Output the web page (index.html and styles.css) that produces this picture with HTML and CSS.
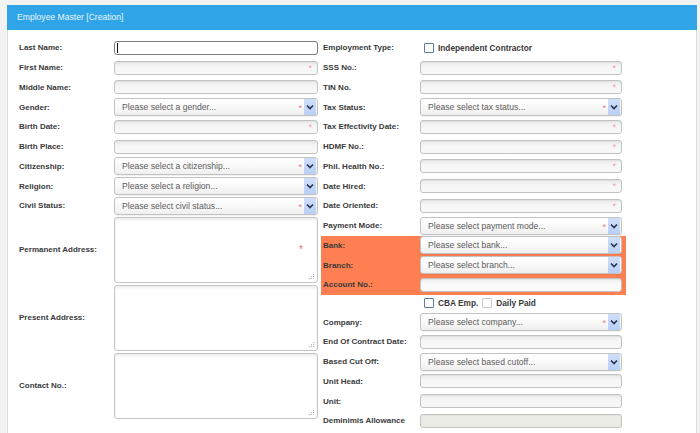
FILE: index.html
```html
<!DOCTYPE html>
<html>
<head>
<meta charset="utf-8">
<link rel="stylesheet" href="styles.css">
</head>
<body>
<div class="panel">
  <div class="panel-header">Employee Master [Creation]</div>
  <div class="panel-body">
    <div class="col col-left">
      <div class="row"><span class="lbl">Last Name:</span><div class="field"><div class="txt focus"><span class="caret"></span></div></div></div>
      <div class="row"><span class="lbl">First Name:</span><div class="field"><div class="txt"><span class="req">*</span></div></div></div>
      <div class="row"><span class="lbl">Middle Name:</span><div class="field"><div class="txt"></div></div></div>
      <div class="row"><span class="lbl">Gender:</span><div class="field"><div class="sel"><span class="ph">Please select a gender...</span><span class="sreq">*</span><span class="btn"><svg width="8" height="6" viewBox="0 0 8 6"><path d="M1 1.5 L4 4.5 L7 1.5" fill="none" stroke="#26344f" stroke-width="1.6"/></svg></span></div></div></div>
      <div class="row"><span class="lbl">Birth Date:</span><div class="field"><div class="txt"><span class="req">*</span></div></div></div>
      <div class="row"><span class="lbl">Birth Place:</span><div class="field"><div class="txt"></div></div></div>
      <div class="row"><span class="lbl">Citizenship:</span><div class="field"><div class="sel"><span class="ph">Please select a citizenship...</span><span class="sreq">*</span><span class="btn"><svg width="8" height="6" viewBox="0 0 8 6"><path d="M1 1.5 L4 4.5 L7 1.5" fill="none" stroke="#26344f" stroke-width="1.6"/></svg></span></div></div></div>
      <div class="row"><span class="lbl">Religion:</span><div class="field"><div class="sel"><span class="ph">Please select a religion...</span><span class="btn"><svg width="8" height="6" viewBox="0 0 8 6"><path d="M1 1.5 L4 4.5 L7 1.5" fill="none" stroke="#26344f" stroke-width="1.6"/></svg></span></div></div></div>
      <div class="row"><span class="lbl">Civil Status:</span><div class="field"><div class="sel"><span class="ph">Please select civil status...</span><span class="sreq">*</span><span class="btn"><svg width="8" height="6" viewBox="0 0 8 6"><path d="M1 1.5 L4 4.5 L7 1.5" fill="none" stroke="#26344f" stroke-width="1.6"/></svg></span></div></div></div>
      <div class="row row-ta"><span class="lbl">Permanent Address:</span><div class="field"><div class="ta"><span class="tareq">*</span><svg class="grip" width="7" height="7" viewBox="0 0 7 7"><g fill="#b5b5b5"><rect x="5" y="1" width="1" height="1"/><rect x="3" y="3" width="1" height="1"/><rect x="5" y="3" width="1" height="1"/><rect x="1" y="5" width="1" height="1"/><rect x="3" y="5" width="1" height="1"/><rect x="5" y="5" width="1" height="1"/></g></svg></div></div></div>
      <div class="row row-ta"><span class="lbl">Present Address:</span><div class="field"><div class="ta"><svg class="grip" width="7" height="7" viewBox="0 0 7 7"><g fill="#b5b5b5"><rect x="5" y="1" width="1" height="1"/><rect x="3" y="3" width="1" height="1"/><rect x="5" y="3" width="1" height="1"/><rect x="1" y="5" width="1" height="1"/><rect x="3" y="5" width="1" height="1"/><rect x="5" y="5" width="1" height="1"/></g></svg></div></div></div>
      <div class="row row-ta"><span class="lbl">Contact No.:</span><div class="field"><div class="ta"><svg class="grip" width="7" height="7" viewBox="0 0 7 7"><g fill="#b5b5b5"><rect x="5" y="1" width="1" height="1"/><rect x="3" y="3" width="1" height="1"/><rect x="5" y="3" width="1" height="1"/><rect x="1" y="5" width="1" height="1"/><rect x="3" y="5" width="1" height="1"/><rect x="5" y="5" width="1" height="1"/></g></svg></div></div></div>
    </div>
    <div class="col col-right">
      <div class="row"><span class="lbl">Employment Type:</span><div class="field checks"><span class="cb"></span><span class="cbl">Independent Contractor</span></div></div>
      <div class="row"><span class="lbl">SSS No.:</span><div class="field"><div class="txt"><span class="req">*</span></div></div></div>
      <div class="row"><span class="lbl">TIN No.</span><div class="field"><div class="txt"><span class="req">*</span></div></div></div>
      <div class="row"><span class="lbl">Tax Status:</span><div class="field"><div class="sel"><span class="ph">Please select tax status...</span><span class="sreq">*</span><span class="btn"><svg width="8" height="6" viewBox="0 0 8 6"><path d="M1 1.5 L4 4.5 L7 1.5" fill="none" stroke="#26344f" stroke-width="1.6"/></svg></span></div></div></div>
      <div class="row"><span class="lbl">Tax Effectivity Date:</span><div class="field"><div class="txt"><span class="req">*</span></div></div></div>
      <div class="row"><span class="lbl">HDMF No.:</span><div class="field"><div class="txt"><span class="req">*</span></div></div></div>
      <div class="row"><span class="lbl">Phil. Health No.:</span><div class="field"><div class="txt"><span class="req">*</span></div></div></div>
      <div class="row"><span class="lbl">Date Hired:</span><div class="field"><div class="txt"><span class="req">*</span></div></div></div>
      <div class="row"><span class="lbl">Date Oriented:</span><div class="field"><div class="txt"><span class="req">*</span></div></div></div>
      <div class="row"><span class="lbl">Payment Mode:</span><div class="field"><div class="sel"><span class="ph">Please select payment mode...</span><span class="sreq">*</span><span class="btn"><svg width="8" height="6" viewBox="0 0 8 6"><path d="M1 1.5 L4 4.5 L7 1.5" fill="none" stroke="#26344f" stroke-width="1.6"/></svg></span></div></div></div>
      <div class="bank-group">
        <div class="row"><span class="lbl">Bank:</span><div class="field"><div class="sel"><span class="ph">Please select bank...</span><span class="btn"><svg width="8" height="6" viewBox="0 0 8 6"><path d="M1 1.5 L4 4.5 L7 1.5" fill="none" stroke="#26344f" stroke-width="1.6"/></svg></span></div></div></div>
        <div class="row"><span class="lbl">Branch:</span><div class="field"><div class="sel"><span class="ph">Please select branch...</span><span class="btn"><svg width="8" height="6" viewBox="0 0 8 6"><path d="M1 1.5 L4 4.5 L7 1.5" fill="none" stroke="#26344f" stroke-width="1.6"/></svg></span></div></div></div>
        <div class="row"><span class="lbl">Account No.:</span><div class="field"><div class="txt plain"></div></div></div>
      </div>
      <div class="row row-checks"><span class="lbl"></span><div class="field checks"><span class="cb"></span><span class="cbl">CBA Emp.</span><span class="cb light"></span><span class="cbl">Daily Paid</span></div></div>
      <div class="row"><span class="lbl">Company:</span><div class="field"><div class="sel"><span class="ph">Please select company...</span><span class="sreq">*</span><span class="btn"><svg width="8" height="6" viewBox="0 0 8 6"><path d="M1 1.5 L4 4.5 L7 1.5" fill="none" stroke="#26344f" stroke-width="1.6"/></svg></span></div></div></div>
      <div class="row"><span class="lbl">End Of Contract Date:</span><div class="field"><div class="txt"></div></div></div>
      <div class="row"><span class="lbl">Based Cut Off:</span><div class="field"><div class="sel"><span class="ph">Please select based cutoff...</span><span class="btn"><svg width="8" height="6" viewBox="0 0 8 6"><path d="M1 1.5 L4 4.5 L7 1.5" fill="none" stroke="#26344f" stroke-width="1.6"/></svg></span></div></div></div>
      <div class="row"><span class="lbl">Unit Head:</span><div class="field"><div class="txt"></div></div></div>
      <div class="row"><span class="lbl">Unit:</span><div class="field"><div class="txt"></div></div></div>
      <div class="row"><span class="lbl">Deminimis Allowance</span><div class="field"><div class="txt disabled"></div></div></div>
    </div>
  </div>
</div>
</body>
</html>
```
FILE: styles.css
```css
html, body {
  margin: 0;
  padding: 0;
  background: #f3f3f3;
  font-family: "Liberation Sans", Arial, sans-serif;
  overflow: hidden;
}

.panel {
  margin: 5px 3px 0 7px;
  border: 1px solid #dcdcdc;
  border-top: none;
  background: #ffffff;
  height: 440px;
}

.panel-header {
  height: 25px;
  line-height: 25px;
  background: #2fa4e7;
  color: #e9f5fd;
  font-size: 8.6px;
  padding-left: 10px;
  margin: 0 -1px;
}

.panel-body {
  display: flex;
  padding: 8px 0 0 11px;
}

.row {
  display: flex;
  align-items: center;
  height: 19.75px;
}

.lbl {
  flex: none;
  font-size: 8px;
  font-weight: bold;
  color: #3a3a3a;
  white-space: nowrap;
}

.col-left .lbl {
  width: 95px;
}

.col-left .field {
  width: 204px;
}

.col-right {
  margin-left: 3px;
  width: 305px;
}

.col-right .row {
  padding-left: 2px;
}

.col-right .lbl {
  width: 97px;
}

.col-right .field {
  width: 202px;
}

.field {
  position: relative;
  flex: none;
}

.txt {
  position: relative;
  box-sizing: border-box;
  height: 14px;
  border: 1px solid #c2c2c2;
  border-radius: 3px;
  background: linear-gradient(#ebebeb, #f6f6f6 45%, #f8f8f8);
  box-shadow: inset 0 1px 1px rgba(0, 0, 0, 0.05);
}

.txt.focus {
  border-color: #7c7c7c;
  background: #ffffff;
  box-shadow: none;
}

.txt.plain {
  background: linear-gradient(#efefef, #fafafa 45%, #fbfbfb);
}

.txt.disabled {
  background: #ecece7;
  border-color: #c4c4c0;
}

.caret {
  position: absolute;
  left: 2px;
  top: 1px;
  width: 1px;
  height: 10px;
  background: #111;
}

.req {
  position: absolute;
  right: 5px;
  top: 0;
  font-size: 9px;
  line-height: 12px;
  color: #f3a3a3;
}

.sel {
  box-sizing: border-box;
  height: 18px;
  display: flex;
  align-items: center;
  border: 1px solid #c2c2c2;
  border-radius: 3px;
  background: linear-gradient(#ffffff, #f9f9f9 50%, #efefef);
  box-shadow: 0 1px 1px rgba(0, 0, 0, 0.06);
  padding: 0 1px 0 7px;
}

.ph {
  flex: 1;
  font-size: 8.6px;
  color: #5c5c5c;
  white-space: nowrap;
}

.sreq {
  font-size: 9px;
  color: #e9787c;
  margin-right: 2px;
  line-height: 10px;
  padding-top: 2px;
}

.btn {
  flex: none;
  width: 12px;
  height: 16px;
  display: flex;
  align-items: center;
  justify-content: center;
  background: linear-gradient(#cfdffa, #b9cff4);
}

.row-ta {
  height: 68px;
}

.ta {
  position: relative;
  box-sizing: border-box;
  height: 66px;
  border: 1px solid #c4c4c4;
  border-radius: 3px;
  background: #ffffff;
  box-shadow: inset 0 2px 3px rgba(0, 0, 0, 0.07);
}

.tareq {
  position: absolute;
  right: 14px;
  top: 26px;
  font-size: 10px;
  color: #ee6f73;
}

.grip {
  position: absolute;
  right: 2px;
  bottom: 2px;
}

.bank-group {
  background: #fe8052;
  margin-right: -2px;
  width: 305px;
}

.row-checks {
  height: 17.4px;
}

.checks {
  display: flex;
  align-items: center;
  padding-left: 4px;
  box-sizing: border-box;
}

.cb {
  box-sizing: border-box;
  width: 10px;
  height: 10px;
  border: 1px solid #5e7c9d;
  background: #fff;
  border-radius: 1px;
  margin-right: 4px;
}

.cb.light {
  border-color: #cacaca;
  margin-left: 4px;
}

.cbl {
  font-size: 8.3px;
  font-weight: bold;
  color: #3a3a3a;
  white-space: nowrap;
}
```
